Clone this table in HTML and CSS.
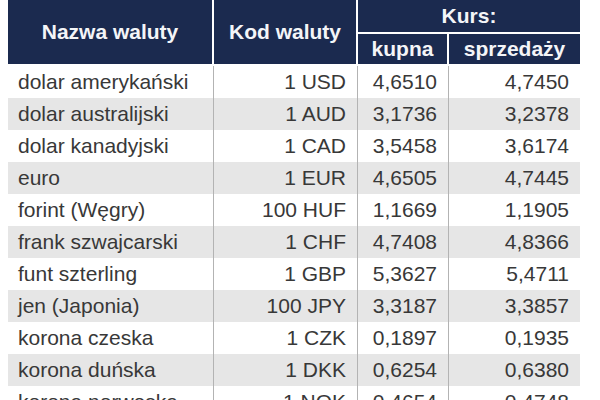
FILE: index.html
```html
<!DOCTYPE html>
<html lang="pl">
<head>
<meta charset="utf-8">
<title>Kursy walut</title>
<link rel="stylesheet" href="styles.css">
</head>
<body>
<table class="rates">
  <colgroup>
    <col class="c-name">
    <col class="c-code">
    <col class="c-buy">
    <col class="c-sell">
  </colgroup>
  <thead>
    <tr class="h1">
      <th rowspan="2" class="sep">Nazwa waluty</th>
      <th rowspan="2" class="sep">Kod waluty</th>
      <th colspan="2" class="kurs">Kurs:</th>
    </tr>
    <tr class="h2">
      <th class="sep">kupna</th>
      <th>sprzedaży</th>
    </tr>
  </thead>
  <tbody>
    <tr><td>dolar amerykański</td><td class="num">1 USD</td><td class="num">4,6510</td><td class="num">4,7450</td></tr>
    <tr><td>dolar australijski</td><td class="num">1 AUD</td><td class="num">3,1736</td><td class="num">3,2378</td></tr>
    <tr><td>dolar kanadyjski</td><td class="num">1 CAD</td><td class="num">3,5458</td><td class="num">3,6174</td></tr>
    <tr><td>euro</td><td class="num">1 EUR</td><td class="num">4,6505</td><td class="num">4,7445</td></tr>
    <tr><td>forint (Węgry)</td><td class="num">100 HUF</td><td class="num">1,1669</td><td class="num">1,1905</td></tr>
    <tr><td>frank szwajcarski</td><td class="num">1 CHF</td><td class="num">4,7408</td><td class="num">4,8366</td></tr>
    <tr><td>funt szterling</td><td class="num">1 GBP</td><td class="num">5,3627</td><td class="num">5,4711</td></tr>
    <tr><td>jen (Japonia)</td><td class="num">100 JPY</td><td class="num">3,3187</td><td class="num">3,3857</td></tr>
    <tr><td>korona czeska</td><td class="num">1 CZK</td><td class="num">0,1897</td><td class="num">0,1935</td></tr>
    <tr><td>korona duńska</td><td class="num">1 DKK</td><td class="num">0,6254</td><td class="num">0,6380</td></tr>
    <tr><td>korona norweska</td><td class="num">1 NOK</td><td class="num">0,4654</td><td class="num">0,4748</td></tr>
  </tbody>
</table>
</body>
</html>
```
FILE: styles.css
```css
html, body {
  margin: 0;
  padding: 0;
  background: #ffffff;
}

body {
  padding-left: 8px;
  font-family: "Liberation Sans", Arial, sans-serif;
}

.rates {
  width: 572px;
  table-layout: fixed;
  border-collapse: separate;
  border-spacing: 0;
}

.c-name { width: 206px; }
.c-code { width: 144px; }
.c-buy { width: 91px; }
.c-sell { width: 131px; }

.rates th,
.rates td {
  box-sizing: border-box;
  padding: 0;
}

.rates th {
  background: #1b2a4f;
  color: #f4f5f8;
  font-size: 21px;
  font-weight: bold;
  text-align: center;
  vertical-align: middle;
  border-bottom: 2px solid #ffffff;
}

.rates th.sep {
  border-right: 2px solid #ffffff;
}

.rates .h1 th.kurs {
  height: 34px;
  padding-bottom: 1px;
}

.rates .h2 th {
  height: 32px;
}

.rates td {
  height: 32px;
  font-size: 21px;
  color: #383838;
  padding: 0 10px;
  border-right: 1px solid #b3b3b3;
  white-space: nowrap;
  overflow: hidden;
}

.rates td:last-child {
  border-right: none;
}

.rates td.num {
  text-align: right;
  padding-right: 11px;
}

.rates tbody tr:nth-child(even) td {
  background: #e6e6e6;
}
```
